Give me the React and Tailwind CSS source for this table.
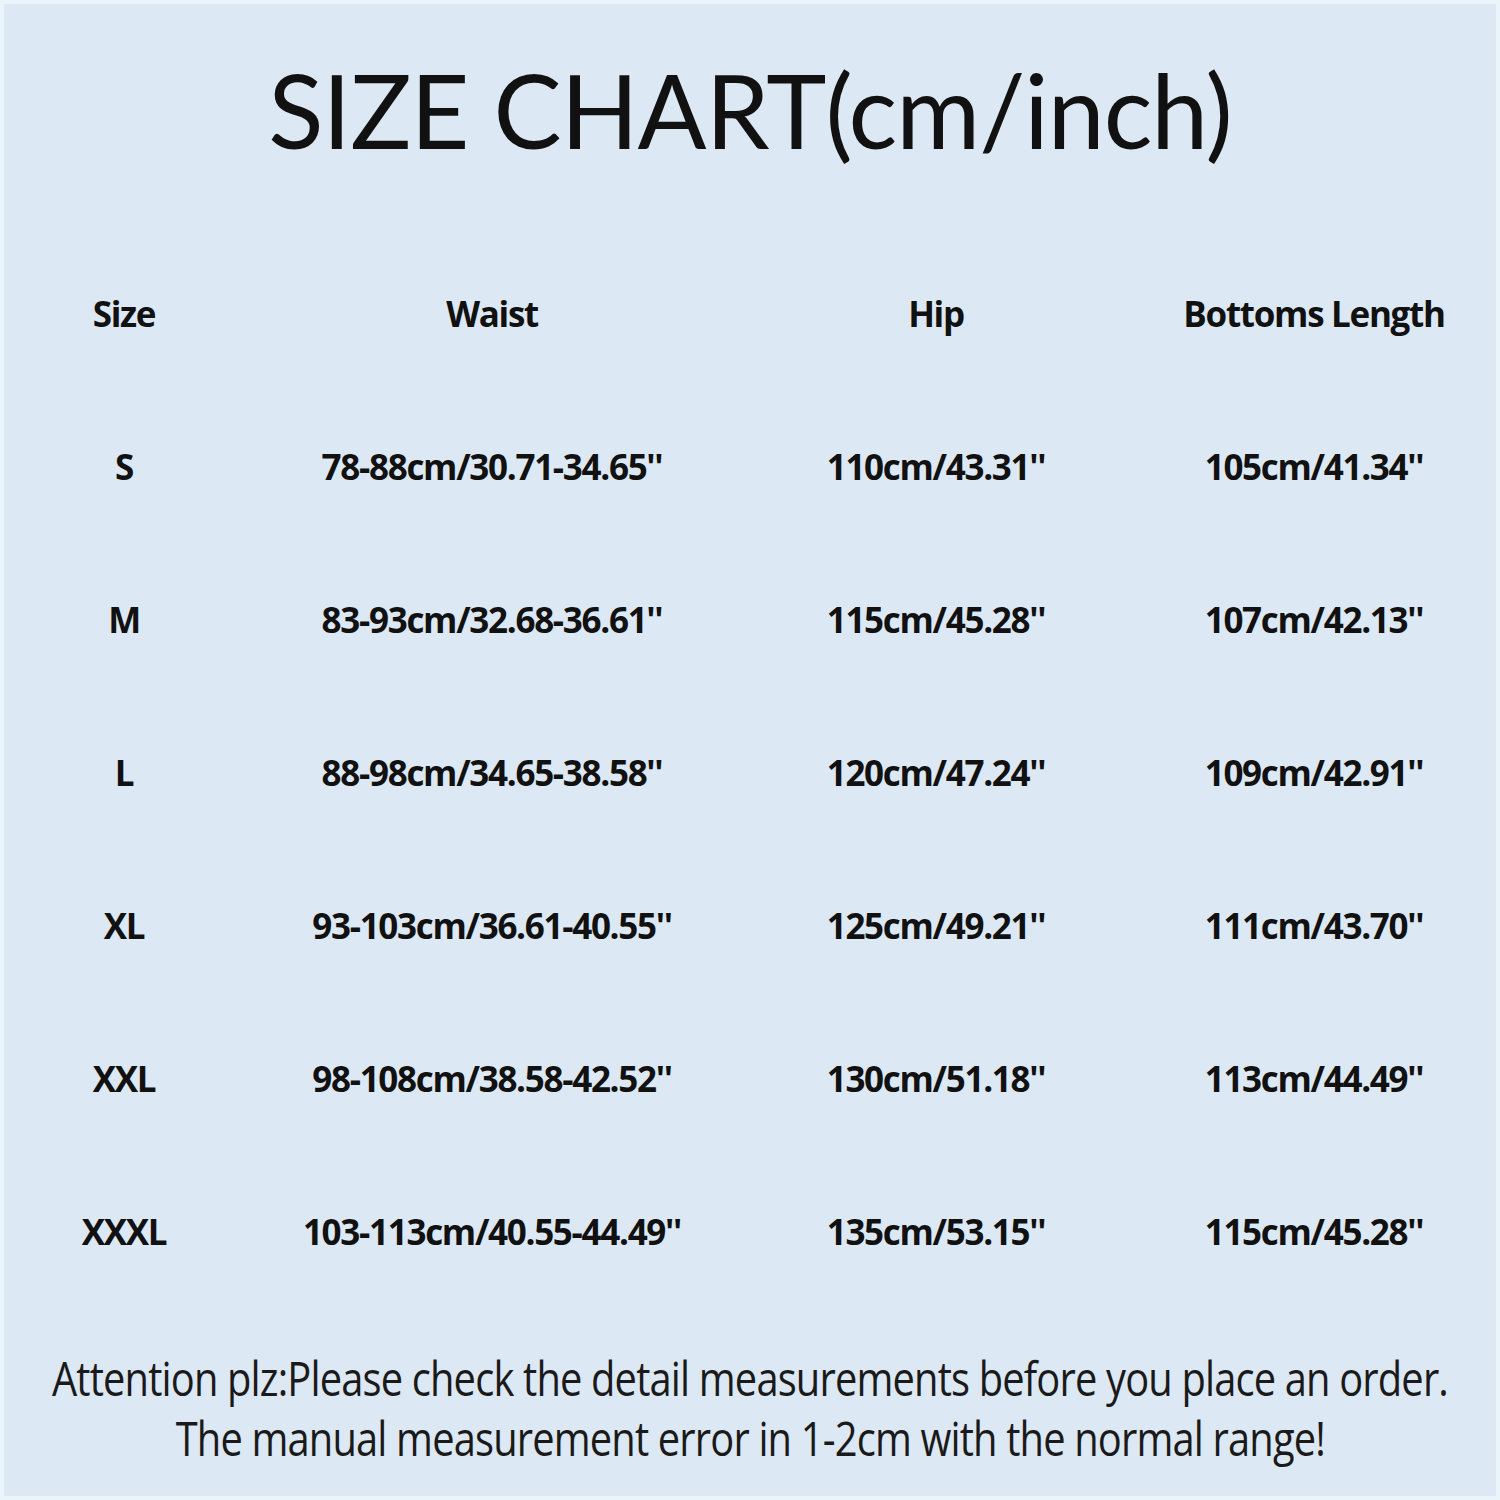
import React from "react";

const rows = [
  ["S", "78-88cm/30.71-34.65''", "110cm/43.31''", "105cm/41.34''"],
  ["M", "83-93cm/32.68-36.61''", "115cm/45.28''", "107cm/42.13''"],
  ["L", "88-98cm/34.65-38.58''", "120cm/47.24''", "109cm/42.91''"],
  ["XL", "93-103cm/36.61-40.55''", "125cm/49.21''", "111cm/43.70''"],
  ["XXL", "98-108cm/38.58-42.52''", "130cm/51.18''", "113cm/44.49''"],
  ["XXXL", "103-113cm/40.55-44.49''", "135cm/53.15''", "115cm/45.28''"],
];

export default function App() {
  return (
    <div className="w-[1500px] h-[1500px] bg-[#e9f4fb] p-[4px]">
      <div className="w-full h-full bg-[#dce8f3] flex flex-col text-[#111]">
        <div className="h-[234px] flex items-start justify-center pt-[46px]">
          <h1 className="text-[102px] leading-[120px] font-[Lato,sans-serif] font-normal tracking-[-1px]">
            SIZE CHART(cm/inch)
          </h1>
        </div>
        <div className="grid grid-cols-[240px_496px_392px_364px] font-['Open_Sans',sans-serif] font-bold text-[35px] tracking-[-1.3px]">
          {[["Size", "Waist", "Hip", "Bottoms Length"], ...rows].map((r, i) => (
            <React.Fragment key={i}>
              {r.map((c, j) => (
                <div key={j} className="h-[153px] flex items-center justify-center">
                  {c}
                </div>
              ))}
            </React.Fragment>
          ))}
        </div>
        <div className="flex-1 flex flex-col items-center pt-[39px] font-['Open_Sans',sans-serif] text-[48px] leading-[60px] tracking-[-1px] text-[#1a1a1a]">
          <p className="whitespace-nowrap scale-x-[0.83]">Attention plz:Please check the detail measurements before you place an order.</p>
          <p className="whitespace-nowrap scale-x-[0.83]">The manual measurement error in 1-2cm with the normal range!</p>
        </div>
      </div>
    </div>
  );
}
